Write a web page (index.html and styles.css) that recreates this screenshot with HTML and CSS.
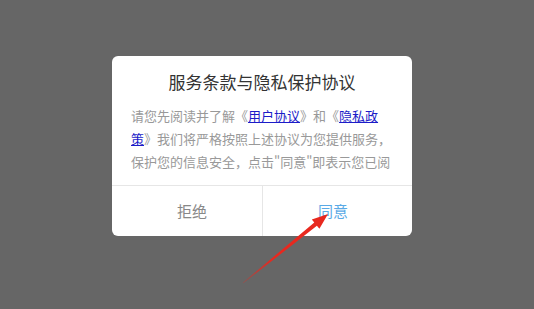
FILE: index.html
```html
<!DOCTYPE html>
<html lang="zh-CN">
<head>
  <meta charset="UTF-8" />
  <meta name="viewport" content="width=device-width, initial-scale=1.0"/>
  <title>服务条款与隐私保护协议</title>
  <link rel="stylesheet" href="styles.css">
</head>
<body>

<!-- Mask + dialog -->
<div class="mask">
  <div class="dialog">
    <h2 class="dialog-title">服务条款与隐私保护协议</h2>
    <div class="dialog-content">
      <p>请您先阅读并了解《<a href="#">用户协议</a>》和《<a href="#">隐私政策</a>》我们将严格按照上述协议为您提供服务，保护您的信息安全，点击"同意"即表示您已阅</p>
    </div>
    <div class="dialog-actions">
      <button class="btn btn-reject">拒绝</button>
      <button class="btn btn-agree">同意</button>
    </div>
  </div>

  <!-- red arrow pointing at the agree button -->
  <svg class="arrow" width="534" height="309" viewBox="0 0 534 309">
    <defs>
      <linearGradient id="fade" x1="243" y1="283" x2="328" y2="214" gradientUnits="userSpaceOnUse">
        <stop offset="0" stop-color="#e8281e" stop-opacity="0.3"/>
        <stop offset="0.35" stop-color="#e8281e"/>
        <stop offset="1" stop-color="#e8281e"/>
      </linearGradient>
    </defs>
    <polygon fill="url(#fade)" points="328,214 319.4,228.8 316.9,225.7 243.3,283.3 242.7,282.7 314.3,222.5 311.8,219.4"/>
  </svg>
</div>

</body>
</html>
```

FILE: styles.css
```css
body { margin: 0; padding: 0; font-family: "Noto Sans CJK SC", "Noto Sans", sans-serif; }
.mask { position: relative; width: 534px; height: 309px; background: #666666; overflow: hidden; padding-top: 56px; padding-left: 112px; box-sizing: border-box; }
.dialog { width: 300px; background: #fff; border-radius: 6px; overflow: hidden; }
.dialog-title { margin: 0; padding-top: 14px; font-size: 17px; font-weight: normal; line-height: 24px; color: #333; text-align: center; }
.dialog-content { margin: 10px 0 12px; padding: 0 17px 0 19px; height: 69px; overflow: hidden; }
.dialog-content p { margin: 0; font-size: 13px; line-height: 23px; color: #999; }
.dialog-content a { color: #1c1cc8; text-decoration: underline; }
.dialog-actions { display: flex; border-top: 1px solid #e6e6e6; height: 50px; }
.btn { flex: 1; background: none; border: none; font-family: inherit; font-size: 15px; line-height: 50px; padding: 0; cursor: pointer; }
.btn-reject { color: #888; padding-left: 10px; }
.btn-agree { color: #5aaae6; border-left: 1px solid #e6e6e6; padding-right: 9px; }
.arrow { position: absolute; left: 0; top: 0; pointer-events: none; }
```
